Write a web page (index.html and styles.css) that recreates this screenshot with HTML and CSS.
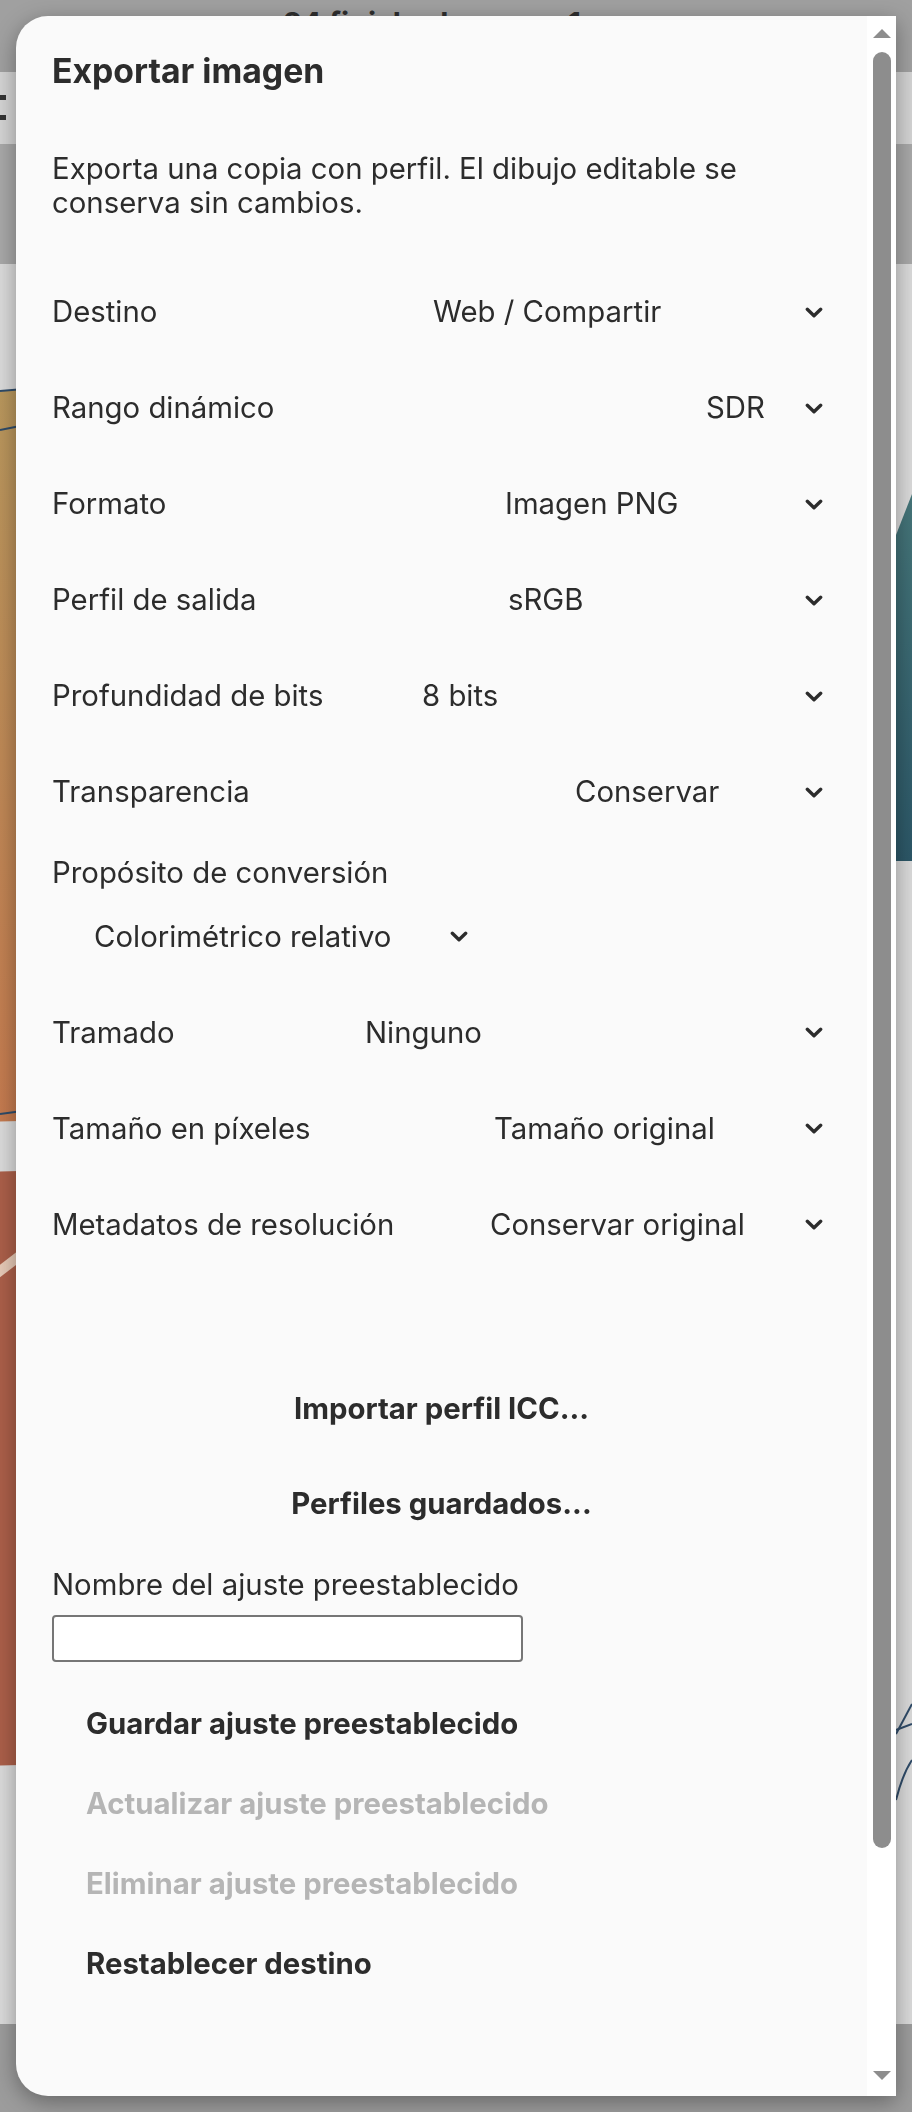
FILE: index.html
```html
<!DOCTYPE html>
<html lang="es">
  <head>
    <meta charset="UTF-8" />
    <meta name="viewport" content="width=device-width, initial-scale=1.0" />
    <title>Exportar imagen</title>

    <link rel="stylesheet" href="styles.css">
  </head>
  <body>
    <!-- the drawing app sits behind the modal, dimmed -->
    <div class="app" aria-hidden="true">
      <header class="app__bar">
        <span class="app__title">24 finished canvas 1</span>
      </header>
      <div class="app__tools">
        <svg class="app__menu" width="6" height="26" viewBox="0 0 6 26">
          <rect x="0" y="0" width="6" height="5" />
          <rect x="0" y="20" width="6" height="5" />
        </svg>
      </div>
      <div class="app__strip"></div>
      <div class="app__canvas">
        <svg viewBox="0 0 912 1760" preserveAspectRatio="none">
          <defs>
            <linearGradient id="ochre" x1="0" y1="0" x2="0" y2="1">
              <stop offset="0" stop-color="#b8975d" />
              <stop offset="1" stop-color="#c47a4f" />
            </linearGradient>
            <linearGradient id="teal" x1="0" y1="0" x2="0" y2="1">
              <stop offset="0" stop-color="#457579" />
              <stop offset="1" stop-color="#2c5767" />
            </linearGradient>
          </defs>
          <polygon points="-20,130 60,120 60,856 -20,858" fill="url(#ochre)" />
          <polygon points="-20,908 60,906 60,1500 -20,1502" fill="#ab5f49" />
          <path d="M-4 1010 L30 984" stroke="#e6c9b6" stroke-width="10" />
          <polygon points="896,271 912,230 912,597 896,597" fill="url(#teal)" />
          <g fill="none" stroke="#2f4b68" stroke-width="2">
            <path d="M0 127 L60 122" />
            <path d="M0 166 L60 154" />
            <path d="M0 850 L60 842" />
            <path d="M896 1466 L912 1460" />
            <path d="M896 1536 C900 1520 906 1505 912 1496" />
            <path d="M896 1470 L912 1440" />
          </g>
        </svg>
      </div>
      <div class="app__footer"></div>
    </div>

    <div class="dialog" role="dialog" aria-labelledby="export-title">
      <div class="dialog__body">
        <h2 id="export-title" class="dialog__title">Exportar imagen</h2>
        <p class="dialog__intro">
          Exporta una copia con perfil. El dibujo editable se conserva sin
          cambios.
        </p>

        <div class="field">
          <span class="field__label">Destino</span>
          <button class="picker picker--destination">
            <span>Web / Compartir</span>
            <svg width="18" height="11" viewBox="0 0 18 11"><path d="M2.3 2.3 9 8.7 15.7 2.3" /></svg>
          </button>
        </div>

        <div class="field">
          <span class="field__label">Rango dinámico</span>
          <button class="picker picker--range">
            <span>SDR</span>
            <svg width="18" height="11" viewBox="0 0 18 11"><path d="M2.3 2.3 9 8.7 15.7 2.3" /></svg>
          </button>
        </div>

        <div class="field">
          <span class="field__label">Formato</span>
          <button class="picker picker--format">
            <span>Imagen PNG</span>
            <svg width="18" height="11" viewBox="0 0 18 11"><path d="M2.3 2.3 9 8.7 15.7 2.3" /></svg>
          </button>
        </div>

        <div class="field">
          <span class="field__label">Perfil de salida</span>
          <button class="picker picker--profile">
            <span>sRGB</span>
            <svg width="18" height="11" viewBox="0 0 18 11"><path d="M2.3 2.3 9 8.7 15.7 2.3" /></svg>
          </button>
        </div>

        <div class="field">
          <span class="field__label">Profundidad de bits</span>
          <button class="picker picker--depth">
            <span>8 bits</span>
            <svg width="18" height="11" viewBox="0 0 18 11"><path d="M2.3 2.3 9 8.7 15.7 2.3" /></svg>
          </button>
        </div>

        <div class="field">
          <span class="field__label">Transparencia</span>
          <button class="picker picker--alpha">
            <span>Conservar</span>
            <svg width="18" height="11" viewBox="0 0 18 11"><path d="M2.3 2.3 9 8.7 15.7 2.3" /></svg>
          </button>
        </div>

        <div class="field field--stacked">
          <span class="field__label">Propósito de conversión</span>
          <button class="picker picker--intent">
            <span>Colorimétrico relativo</span>
            <svg width="18" height="11" viewBox="0 0 18 11"><path d="M2.3 2.3 9 8.7 15.7 2.3" /></svg>
          </button>
        </div>

        <div class="field">
          <span class="field__label">Tramado</span>
          <button class="picker picker--dither">
            <span>Ninguno</span>
            <svg width="18" height="11" viewBox="0 0 18 11"><path d="M2.3 2.3 9 8.7 15.7 2.3" /></svg>
          </button>
        </div>

        <div class="field">
          <span class="field__label">Tamaño en píxeles</span>
          <button class="picker picker--size">
            <span>Tamaño original</span>
            <svg width="18" height="11" viewBox="0 0 18 11"><path d="M2.3 2.3 9 8.7 15.7 2.3" /></svg>
          </button>
        </div>

        <div class="field">
          <span class="field__label">Metadatos de resolución</span>
          <button class="picker picker--dpi">
            <span>Conservar original</span>
            <svg width="18" height="11" viewBox="0 0 18 11"><path d="M2.3 2.3 9 8.7 15.7 2.3" /></svg>
          </button>
        </div>

        <div class="actions">
          <button class="action">Importar perfil ICC...</button>
          <button class="action">Perfiles guardados...</button>
        </div>

        <div class="preset">
          <label class="preset__label" for="preset-name">Nombre del ajuste preestablecido</label>
          <input class="preset__input" id="preset-name" type="text" />

          <div class="preset__actions">
            <button class="action action--row">Guardar ajuste preestablecido</button>
            <button class="action action--row" disabled>Actualizar ajuste preestablecido</button>
            <button class="action action--row" disabled>Eliminar ajuste preestablecido</button>
            <button class="action action--row">Restablecer destino</button>
          </div>
        </div>
      </div>

      <div class="scrollbar" aria-hidden="true">
        <svg class="scrollbar__arrow" width="18" height="9" viewBox="0 0 18 9"><polygon points="0,9 9,0 18,9" /></svg>
        <div class="scrollbar__thumb"></div>
        <svg class="scrollbar__arrow scrollbar__arrow--down" width="18" height="9" viewBox="0 0 18 9"><polygon points="0,0 18,0 9,9" /></svg>
      </div>
    </div>
  </body>
</html>
```

FILE: styles.css
```css
* {
  box-sizing: border-box;
}

html,
body {
  margin: 0;
}

body {
  width: 912px;
  height: 2112px;
  overflow: hidden;
  font-family: Inter, "Noto Sans", sans-serif;
  font-size: 29.35px;
  line-height: 1.21;
  color: #2c2c2c;
  background: #9c9c9c;
}

/* app behind the modal */
.app {
  display: flex;
  flex-direction: column;
  height: 100%;
}

.app__bar {
  height: 72px;
  display: flex;
  justify-content: center;
  padding: 5px 48px 0 0;
  background: #a0a0a0;
}

.app__title {
  font-size: 30px;
  font-weight: 700;
  color: #2e2e2e;
}

.app__tools {
  height: 72px;
  padding-top: 23px;
  background: #d3d3d3;
}

.app__menu {
  display: block;
  fill: #333;
}

.app__strip {
  height: 120px;
  background: #a8a8a8;
}

.app__canvas {
  height: 1760px;
  background: #dadada;
}

.app__canvas svg {
  display: block;
  width: 100%;
  height: 100%;
}

.app__footer {
  flex: 1;
  background: #9c9c9c;
}

/* modal */
.dialog {
  position: fixed;
  top: 16px;
  left: 16px;
  width: 880px;
  height: 2080px;
  display: grid;
  grid-template-columns: 1fr 29px;
  background: #fafafa;
  border-radius: 32px 0 0 32px;
  box-shadow: 0 6px 22px rgba(0, 0, 0, 0.35);
  overflow: hidden;
}

.dialog__body {
  padding: 36px 36px 0;
  overflow: hidden;
}

.dialog__title {
  margin: 0 0 63px;
  font-size: 1.15em;
  font-weight: 700;
  line-height: 37px;
}

.dialog__intro {
  margin: 0 0 44px;
  line-height: 34px;
}

.field {
  display: flex;
  align-items: center;
  justify-content: space-between;
  gap: 13px 16px;
  padding: 15px 0;
}

.field--stacked {
  flex-direction: column;
  align-items: flex-start;
}

.picker {
  display: flex;
  align-items: center;
  justify-content: space-between;
  height: 66px;
  padding: 0 8px 0 0;
  border: 0;
  background: none;
  font: inherit;
  color: inherit;
  text-align: left;
  cursor: pointer;
}

.picker svg {
  flex: none;
  fill: none;
  stroke: currentColor;
  stroke-width: 3.4;
  stroke-linecap: round;
  stroke-linejoin: round;
}

.picker--destination { width: 398px; }
.picker--range { width: 125px; }
.picker--format { width: 326px; }
.picker--profile { width: 323px; }
.picker--depth { width: 409px; }
.picker--alpha { width: 256px; }
.picker--dither { width: 466px; }
.picker--size { width: 337px; }
.picker--dpi { width: 341px; }

.picker--intent {
  width: 382px;
  margin-left: 42px;
}

.actions {
  margin-top: 89px;
}

.action {
  display: block;
  width: 100%;
  height: 95px;
  padding: 0;
  border: 0;
  background: none;
  font: inherit;
  font-weight: 700;
  color: inherit;
  cursor: pointer;
}

.action:disabled {
  color: #b5b5b5;
  cursor: default;
}

.action--row {
  height: 80px;
  padding-left: 34px;
  text-align: left;
}

.preset {
  margin-top: 15px;
}

.preset__label {
  display: block;
}

.preset__input {
  display: block;
  width: 471px;
  height: 47px;
  margin-top: 13px;
  border: 2px solid #767676;
  border-radius: 4px;
  background: #fff;
  font: inherit;
}

.preset__actions {
  margin-top: 22px;
}

/* scroll track drawn by the dialog */
.scrollbar {
  display: flex;
  flex-direction: column;
  align-items: center;
  padding: 13px 0 16px;
  background: #fff;
}

.scrollbar__arrow {
  display: block;
  flex: none;
  fill: #8d8d8d;
}

.scrollbar__arrow--down {
  margin-top: auto;
}

.scrollbar__thumb {
  width: 18px;
  height: 1796px;
  margin-top: 14px;
  border-radius: 9px;
  background: #8d8d8d;
}
```
